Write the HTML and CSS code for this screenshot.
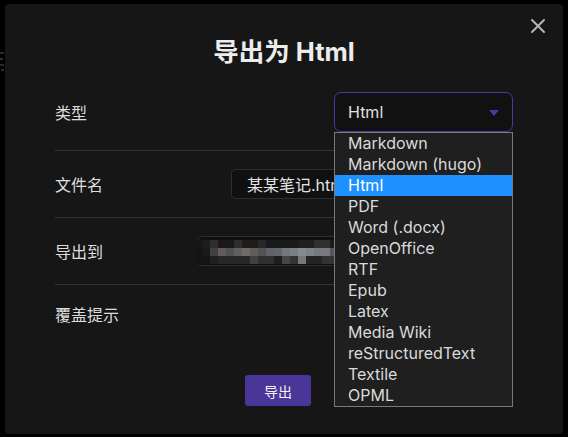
FILE: index.html
```html
<!DOCTYPE html>
<html lang="zh">
<head>
<meta charset="utf-8">
<link rel="stylesheet" href="styles.css">
</head>
<body>
<div class="backdrop">
  <div class="ghost"></div>
  <div class="dialog">
    <button class="close" aria-label="关闭">
      <svg width="16" height="16" viewBox="0 0 16 16"><path d="M2 2 L14 14 M14 2 L2 14" stroke="#b4b4b4" stroke-width="2" stroke-linecap="round"/></svg>
    </button>
    <h1 class="title">导出为 Html</h1>
    <div class="form">
      <div class="row row-type">
        <span class="label">类型</span>
        <div class="select">
          <span>Html</span>
          <svg class="caret" width="10" height="6" viewBox="0 0 10 6"><path d="M0 0 H10 L5 6 Z" fill="#4b37a8"/></svg>
        </div>
      </div>
      <div class="row">
        <span class="label">文件名</span>
        <div class="input input-name">某某笔记.html</div>
      </div>
      <div class="row">
        <span class="label">导出到</span>
        <div class="input input-path"><div class="mosaic"></div></div>
      </div>
      <div class="row row-last">
        <span class="label">覆盖提示</span>
      </div>
    </div>
    <div class="footer">
      <button class="btn">导出</button>
    </div>
    <ul class="menu">
      <li>Markdown</li>
      <li>Markdown (hugo)</li>
      <li class="active">Html</li>
      <li>PDF</li>
      <li>Word (.docx)</li>
      <li>OpenOffice</li>
      <li>RTF</li>
      <li>Epub</li>
      <li>Latex</li>
      <li>Media Wiki</li>
      <li>reStructuredText</li>
      <li>Textile</li>
      <li>OPML</li>
    </ul>
  </div>
</div>
</body>
</html>
```

FILE: styles.css
```css
html, body {
  margin: 0;
  padding: 0;
  background: #000;
}
body {
  font-family: Inter, "Noto Sans CJK SC", sans-serif;
  color: #dcdcdc;
}
.backdrop {
  position: relative;
  width: 568px;
  height: 437px;
  padding: 4px 5px 3px 5px;
  box-sizing: border-box;
  overflow: hidden;
}
.ghost {
  position: absolute;
  left: 0;
  top: 50px;
  width: 4px;
  height: 22px;
  background:
    linear-gradient(#2a2a2a, #2a2a2a) 0 2px / 4px 2px no-repeat,
    linear-gradient(#333, #333) 0 8px / 3px 2px no-repeat,
    linear-gradient(#2a2a2a, #2a2a2a) 0 14px / 4px 2px no-repeat,
    linear-gradient(#303030, #303030) 1px 19px / 3px 2px no-repeat;
}
.dialog {
  position: relative;
  height: 430px;
  background: #161616;
  border-radius: 4px;
  padding: 0 50px;
  box-sizing: border-box;
  display: flex;
  flex-direction: column;
}
.close {
  position: absolute;
  right: 17px;
  top: 14px;
  width: 16px;
  height: 16px;
  padding: 0;
  border: 0;
  background: none;
  display: flex;
}
.title {
  margin: 32px 0 0 0;
  text-align: center;
  font-size: 25.5px;
  line-height: 31px;
  font-weight: 700;
  color: #ececec;
  font-family: Inter, "Noto Sans CJK SC", sans-serif;
}
.form {
  margin-top: 7px;
  display: flex;
  flex-direction: column;
}
.row {
  display: flex;
  align-items: center;
  justify-content: space-between;
  padding: 18px 0;
  border-bottom: 1px solid #333;
  min-height: 30px;
}
.row-last {
  border-bottom: 0;
  padding: 14px 0 18px 0;
}
.label {
  font-size: 16px;
  line-height: 22px;
  color: #dedede;
  font-family: "Noto Sans CJK SC", sans-serif;
}
.select {
  width: 179px;
  height: 40px;
  box-sizing: border-box;
  border: 1px solid #4a3aa0;
  border-radius: 7px;
  background: #111;
  display: flex;
  align-items: center;
  justify-content: space-between;
  padding: 0 13px 0 13px;
  font-size: 16px;
  color: #e0e0e0;
}
.caret {
  margin-top: 1px;
}
.input {
  height: 30px;
  box-sizing: border-box;
  border: 1px solid #2e2e2e;
  border-radius: 5px;
  background: #101010;
  display: flex;
  align-items: center;
  font-size: 16px;
  color: #e4e4e4;
  overflow: hidden;
  white-space: nowrap;
}
.input-name {
  width: 282px;
  padding-left: 15px;
}
.input-path {
  width: 316px;
  position: relative;
  overflow: visible;
}
.mosaic {
  position: absolute;
  left: -4px;
  top: 3px;
  width: 150px;
  height: 24px;
  background:
    linear-gradient(90deg,
      #161616 0 8px, #1c1c1c 8px 16px, #2e2e2e 16px 24px, #1a1a1a 24px 40px,
      #2e2e2e 40px 48px, #1d1d1d 48px 64px, #282828 64px 72px, #1a1a1a 72px 104px,
      #202020 104px 120px, #303030 120px 136px, #1b1b1b 136px 150px) 0 0 / 150px 8px no-repeat,
    linear-gradient(90deg,
      #141414 0 8px, #1a1a1a 8px 16px, #404040 16px 24px, #645b59 24px 32px,
      #525050 32px 40px, #606060 40px 48px, #726a64 48px 56px, #5e5e5e 56px 64px,
      #525252 64px 72px, #5c636a 72px 80px, #666666 80px 88px, #727880 88px 96px,
      #7a8086 96px 104px, #868b90 104px 112px, #7e8388 112px 120px, #767a80 120px 136px,
      #55575a 136px 150px) 0 8px / 150px 8px no-repeat,
    linear-gradient(90deg,
      #141414 0 16px, #1f1f1f 16px 24px, #262626 24px 56px, #404040 56px 64px,
      #303030 64px 80px, #1d1d1d 80px 88px, #43464a 88px 96px, #333 96px 104px,
      #787878 104px 112px, #242424 112px 128px, #333 128px 150px) 0 16px / 150px 8px no-repeat;
}
.footer {
  display: flex;
  justify-content: center;
  padding-right: 12px;
  margin-top: 28px;
}
.btn {
  width: 66px;
  height: 31px;
  border: 0;
  border-radius: 3px;
  background: #4a3599;
  color: #f2f2f2;
  font-family: "Noto Sans CJK SC", sans-serif;
  font-size: 14px;
  padding: 0;
}
.menu {
  position: absolute;
  left: 329px;
  top: 128px;
  width: 179px;
  box-sizing: border-box;
  margin: 0;
  padding: 0;
  list-style: none;
  background: #1f1f1f;
  border: 1px solid #7a7a7a;
}
.menu li {
  height: 21px;
  line-height: 21px;
  padding-left: 13px;
  font-size: 16px;
  color: #dadada;
  white-space: nowrap;
}
.menu li.active {
  background: #1e90ff;
  color: #fff;
}
```
